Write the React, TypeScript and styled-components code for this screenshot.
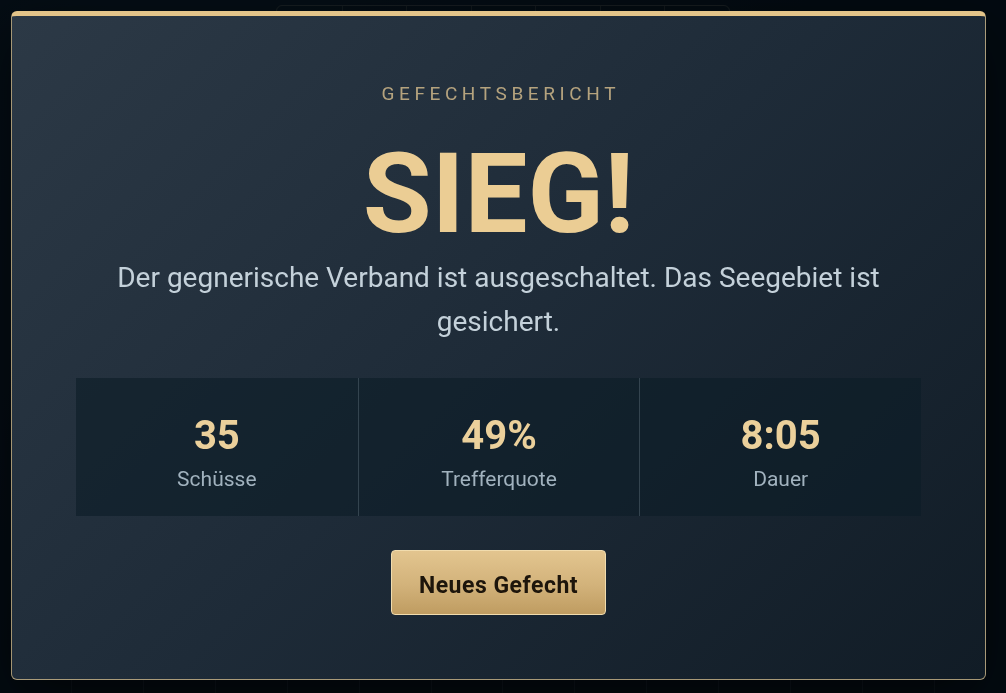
import styled, { createGlobalStyle } from 'styled-components';

const GlobalStyle = createGlobalStyle`
  html, body {
    margin: 0;
    padding: 0;
    background: #07121a;
    font-family: Roboto, "Liberation Sans", sans-serif;
  }
  * {
    box-sizing: border-box;
  }
`;

const Page = styled.div`
  height: 100vh;
  display: flex;
  flex-direction: column;
  align-items: center;
  background: radial-gradient(circle at 20% 10%, #0e1f2b 0%, #07121a 60%);
  overflow: hidden;
`;

// game board behind the result dialog
const BoardHeader = styled.div`
  flex-shrink: 0;
  margin-top: 5px;
  width: 454px;
  height: 40px;
  display: grid;
  grid-template-columns: repeat(7, 1fr);
  border: 1px solid rgba(200, 190, 160, 0.35);
  border-radius: 6px;
`;

const HeaderCell = styled.div`
  & + & {
    border-left: 1px solid rgba(200, 190, 160, 0.25);
  }
`;

const BoardGrid = styled.div`
  flex: 1;
  margin-top: 20px;
  width: 864px;
  display: grid;
  grid-template-columns: repeat(12, 1fr);
  border-left: 1px solid rgba(160, 180, 190, 0.18);
`;

const GridColumn = styled.div`
  border-right: 1px solid rgba(160, 180, 190, 0.18);
`;

const Overlay = styled.div`
  position: fixed;
  inset: 0;
  display: flex;
  padding: 11px 20px 13px 11px;
  background: rgba(3, 9, 14, 0.72);
`;

const Card = styled.section`
  flex: 1;
  display: flex;
  flex-direction: column;
  align-items: center;
  padding: 64px;
  border: 1px solid rgba(214, 190, 140, 0.75);
  border-top: 5px solid #e3c489;
  border-radius: 6px;
  background: linear-gradient(135deg, #2c3946 0%, #1e2b38 50%, #111c26 100%);
  box-shadow: 0 20px 60px rgba(0, 0, 0, 0.5);
`;

const Eyebrow = styled.div`
  font-size: 19px;
  line-height: 28px;
  letter-spacing: 4.6px;
  padding-left: 4.6px;
  color: #b5a37e;
  text-transform: uppercase;
`;

const Title = styled.h1`
  margin: 30px 0 0;
  font-size: 112px;
  line-height: 1;
  font-weight: 700;
  letter-spacing: 0;
  color: #ebcd94;
`;

const Message = styled.p`
  margin: 6px 0 0;
  max-width: 790px;
  font-size: 28px;
  line-height: 44px;
  text-align: center;
  color: #c4d1da;
`;

const Stats = styled.div`
  margin-top: 34px;
  align-self: stretch;
  display: grid;
  grid-template-columns: repeat(3, 1fr);
`;

const Stat = styled.div`
  display: flex;
  flex-direction: column;
  align-items: center;
  gap: 5px;
  padding: 34px 16px 23px;
  background: rgba(12, 28, 38, 0.6);

  & + & {
    border-left: 1px solid #34444f;
  }
`;

const StatValue = styled.div`
  font-size: 40px;
  line-height: 48px;
  font-weight: 700;
  color: #ebd09b;
`;

const StatLabel = styled.div`
  font-size: 21px;
  line-height: 28px;
  color: #a1b2be;
`;

const PrimaryButton = styled.button`
  margin-top: 34px;
  padding: 21px 27px 15px;
  font-family: inherit;
  font-size: 23px;
  line-height: 27px;
  font-weight: 700;
  letter-spacing: 0.5px;
  color: #1d150b;
  background: linear-gradient(180deg, #e3c58f 0%, #d2b27a 55%, #bf9c61 100%);
  border: 1px solid #f1dcae;
  border-radius: 4px;
  cursor: pointer;
`;

const stats = [
  { value: '35', label: 'Schüsse' },
  { value: '49%', label: 'Trefferquote' },
  { value: '8:05', label: 'Dauer' },
];

const App = () => {
  return (
    <>
      <GlobalStyle />
      <Page>
        <BoardHeader>
          {Array.from({ length: 7 }).map((_, i) => (
            <HeaderCell key={i} />
          ))}
        </BoardHeader>
        <BoardGrid>
          {Array.from({ length: 12 }).map((_, i) => (
            <GridColumn key={i} />
          ))}
        </BoardGrid>
      </Page>
      <Overlay>
        <Card>
          <Eyebrow>Gefechtsbericht</Eyebrow>
          <Title>SIEG!</Title>
          <Message>
            Der gegnerische Verband ist ausgeschaltet. Das Seegebiet ist gesichert.
          </Message>
          <Stats>
            {stats.map((s) => (
              <Stat key={s.label}>
                <StatValue>{s.value}</StatValue>
                <StatLabel>{s.label}</StatLabel>
              </Stat>
            ))}
          </Stats>
          <PrimaryButton>Neues Gefecht</PrimaryButton>
        </Card>
      </Overlay>
    </>
  );
};

export default App;
